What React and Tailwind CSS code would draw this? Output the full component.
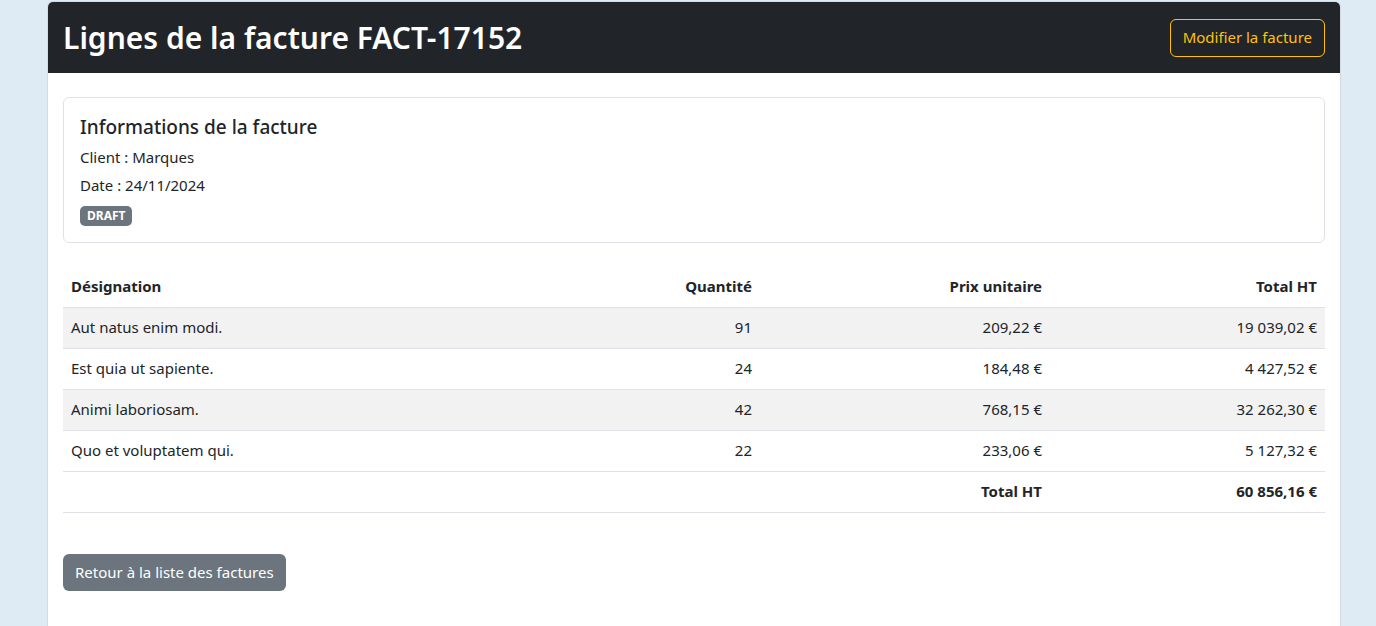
const FONT = "font-['Segoe_UI','Noto_Sans','Open_Sans',sans-serif]";

const LINES = [
  { label: "Aut natus enim modi.", qty: 91, price: "209,22 €", total: "19 039,02 €" },
  { label: "Est quia ut sapiente.", qty: 24, price: "184,48 €", total: "4 427,52 €" },
  { label: "Animi laboriosam.", qty: 42, price: "768,15 €", total: "32 262,30 €" },
  { label: "Quo et voluptatem qui.", qty: 22, price: "233,06 €", total: "5 127,32 €" },
];

export default function App() {
  return (
    <div className={`min-h-screen bg-[#deebf5] pl-[47px] pr-[35px] pt-[1px] ${FONT} text-[#212529]`}>
      <div className="bg-white rounded-t-[6px] border border-[#d5dbe0] border-b-0 min-h-[640px] overflow-hidden">
        {/* Header */}
        <div className="flex items-center justify-between bg-[#212529] h-[71px] px-[15px]">
          <h1 className="text-white text-[30px] font-semibold leading-tight">Lignes de la facture FACT-17152</h1>
          <button className="h-[38px] px-3 rounded-[6px] border border-[#ffc107] text-[#ffc107] text-[15px]">
            Modifier la facture
          </button>
        </div>

        {/* Body */}
        <div className="px-[15px] pt-[24px]">
          <div className="border border-[#dee2e6] rounded-[6px] px-4 pt-[16px] pb-[16px]">
            <h5 className="text-[19px] font-medium leading-snug mb-[7px]">Informations de la facture</h5>
            <p className="text-[15px] leading-[20px] mb-[8px]">Client : Marques</p>
            <p className="text-[15px] leading-[20px] mb-[7px]">Date : 24/11/2024</p>
            <span className="inline-block bg-[#6c757d] text-white text-[12px] font-bold leading-none rounded-[5px] px-[7px] py-[4px]">DRAFT</span>
          </div>

          <table className="w-full mt-[23px] text-[15px] border-collapse">
            <thead>
              <tr className="border-b border-[#dee2e6] h-[41px]">
                <th className="text-left font-bold px-2">Désignation</th>
                <th className="text-right font-bold px-2 w-[300px]">Quantité</th>
                <th className="text-right font-bold px-2 w-[290px]">Prix unitaire</th>
                <th className="text-right font-bold px-2 w-[275px]">Total HT</th>
              </tr>
            </thead>
            <tbody>
              {LINES.map((l, i) => (
                <tr key={l.label} className={`border-b border-[#dee2e6] h-[41px] ${i % 2 === 0 ? "bg-[#f2f2f2]" : ""}`}>
                  <td className="px-2">{l.label}</td>
                  <td className="px-2 text-right">{l.qty}</td>
                  <td className="px-2 text-right">{l.price}</td>
                  <td className="px-2 text-right">{l.total}</td>
                </tr>
              ))}
              <tr className="border-b border-[#dee2e6] h-[41px]">
                <td className="px-2"></td>
                <td className="px-2"></td>
                <td className="px-2 text-right font-bold">Total HT</td>
                <td className="px-2 text-right font-bold">60 856,16 €</td>
              </tr>
            </tbody>
          </table>

          <button className="mt-[41px] h-[37px] px-3 rounded-[6px] bg-[#6c757d] text-white text-[15px]">
            Retour à la liste des factures
          </button>
        </div>
      </div>
    </div>
  );
}
